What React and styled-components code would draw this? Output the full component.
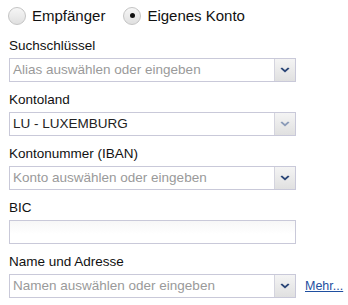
import React from 'react';
import styled, { createGlobalStyle } from 'styled-components';

const GlobalStyle = createGlobalStyle`
  body {
    margin: 0;
    background: #ffffff;
  }
`;

const Form = styled.div`
  width: 348px;
  height: 305px;
  padding: 5px 0 0 9px;
  box-sizing: border-box;
  font-family: "Liberation Sans", Arial, sans-serif;
  font-size: 13.5px;
  color: #111;
`;

const RadioRow = styled.div`
  display: flex;
  align-items: center;
  height: 21px;
  margin-bottom: 12px;
`;

const RadioLabel = styled.label`
  display: flex;
  align-items: center;
  gap: 6px;
  margin-right: 19px;
  margin-left: -1px;
  font-size: 15px;
`;

const Radio = styled.span`
  width: 18px;
  height: 18px;
  border-radius: 50%;
  border: 1px solid #c4c4c4;
  background: linear-gradient(#f6f6f6, #e0e0e0);
  box-sizing: border-box;
  display: flex;
  align-items: center;
  justify-content: center;

  &::after {
    content: '';
    width: 5px;
    height: 5px;
    border-radius: 50%;
    background: ${p => (p.$checked ? '#111' : 'transparent')};
  }
`;

const Field = styled.div`
  display: flex;
  flex-direction: column;
  margin-bottom: 10px;
`;

const Label = styled.div`
  height: 16px;
  line-height: 16px;
  margin-bottom: 4px;
`;

const Row = styled.div`
  display: flex;
  align-items: center;
  gap: 9px;
`;

const Combo = styled.div`
  display: flex;
  width: 287px;
  height: 24px;
  border: 1px solid #c9c9d9;
  box-sizing: border-box;
  background: #fff;
`;

const Input = styled.div`
  flex: 1;
  padding-left: 3px;
  line-height: 22px;
  color: ${p => (p.$placeholder ? '#9a9a9a' : '#222')};
  white-space: nowrap;
  overflow: hidden;
  background: ${p => (p.$plain ? 'linear-gradient(#f7f7f7, #ffffff 60%)' : '#fff')};
`;

const Button = styled.div`
  width: 20px;
  border-left: 1px solid #d4d4de;
  background: linear-gradient(#f4f4f4, #e0e0e0);
  display: flex;
  align-items: center;
  justify-content: center;
`;

const Link = styled.a`
  color: #1f4fa0;
  font-size: 12.5px;
  text-decoration: underline;
`;

const Arrow = ({ light }) => (
  <svg width="10" height="7" viewBox="0 0 10 7">
    <path d="M0.5 1.5 L5 5.5 L9.5 1.5 L8 0.5 L5 3 L2 0.5 Z" fill={light ? '#8b9bb8' : '#2a4576'} />
  </svg>
);

const ComboField = ({ label, value, placeholder, light, extra }) => (
  <Field>
    <Label>{label}</Label>
    <Row>
      <Combo>
        <Input $placeholder={placeholder}>{value}</Input>
        <Button><Arrow light={light} /></Button>
      </Combo>
      {extra}
    </Row>
  </Field>
);

const App = () => (
  <Form>
    <GlobalStyle />
    <RadioRow>
      <RadioLabel><Radio />Empfänger</RadioLabel>
      <RadioLabel><Radio $checked />Eigenes Konto</RadioLabel>
    </RadioRow>
    <ComboField label="Suchschlüssel" value="Alias auswählen oder eingeben" placeholder />
    <ComboField label="Kontoland" value="LU - LUXEMBURG" light />
    <ComboField label="Kontonummer (IBAN)" value="Konto auswählen oder eingeben" placeholder />
    <Field>
      <Label>BIC</Label>
      <Combo>
        <Input $plain />
      </Combo>
    </Field>
    <ComboField
      label="Name und Adresse"
      value="Namen auswählen oder eingeben"
      placeholder
      extra={<Link href="#">Mehr...</Link>}
    />
  </Form>
);

export default App;
